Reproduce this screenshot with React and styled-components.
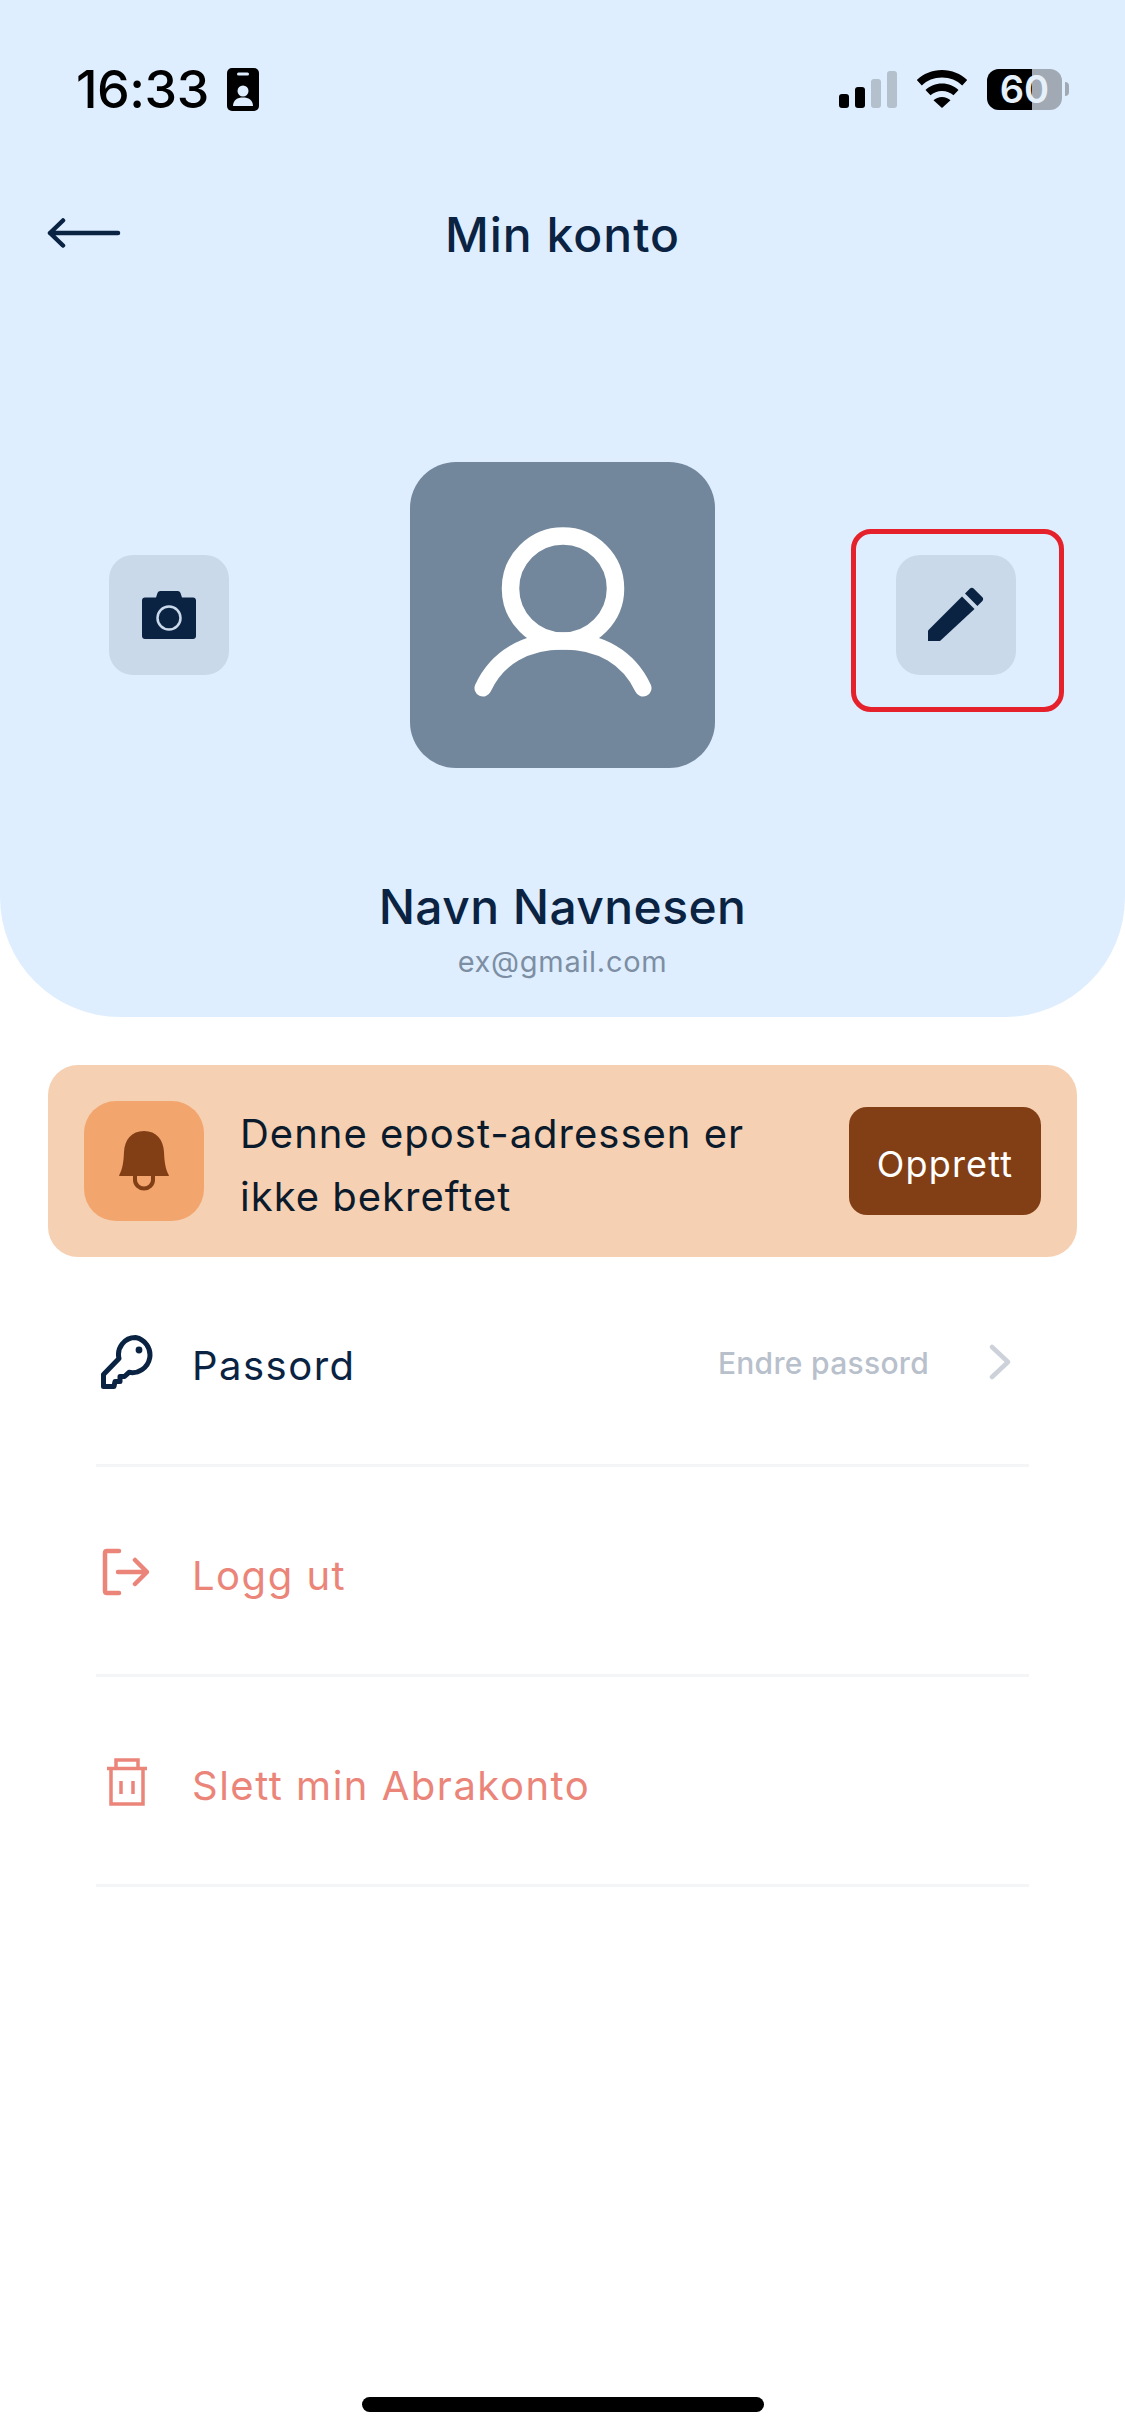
import styled, { createGlobalStyle } from 'styled-components';

const NAVY = '#0a2342';
const CORAL = '#eb8579';
const BROWN = '#823f16';

const GlobalStyle = createGlobalStyle`
  html, body {
    margin: 0;
    padding: 0;
    background: #ffffff;
  }
  * {
    box-sizing: border-box;
  }
  body {
    font-family: Inter, "Liberation Sans", sans-serif;
  }
`;

function App() {
  return (
    <Page>
      <GlobalStyle />
      <Header>
        <StatusBar>
          <StatusLeft>
            <Clock>16:33</Clock>
            <IdBadge />
          </StatusLeft>
          <StatusRight>
            <SignalBars>
              <Bar $height={14} $on />
              <Bar $height={21} $on />
              <Bar $height={29} />
              <Bar $height={37} />
            </SignalBars>
            <WifiIcon />
            <Battery>
              <BatteryFill />
              <BatteryText>60</BatteryText>
            </Battery>
            <BatteryNub />
          </StatusRight>
        </StatusBar>
        <NavBar>
          <BackArrow />
          <Title>Min konto</Title>
        </NavBar>
        <ProfileRow>
          <ActionButton $side='camera'>
            <CameraIcon />
          </ActionButton>
          <Avatar>
            <PersonIcon />
          </Avatar>
          <HighlightFrame>
            <ActionButton>
              <PencilIcon />
            </ActionButton>
          </HighlightFrame>
        </ProfileRow>
        <Name>Navn Navnesen</Name>
        <Email>ex@gmail.com</Email>
      </Header>

      <Banner>
        <BellBox>
          <BellIcon />
        </BellBox>
        <BannerText>
          Denne epost-adressen er
          <br />
          ikke bekreftet
        </BannerText>
        <BannerButton>Opprett</BannerButton>
      </Banner>

      <List>
        <Row>
          <RowIcon $inset={5}>
            <KeyIcon />
          </RowIcon>
          <RowLabel>Passord</RowLabel>
          <RowHint>Endre passord</RowHint>
          <Chevron />
        </Row>
        <Row>
          <RowIcon $inset={5}>
            <LogoutIcon />
          </RowIcon>
          <RowLabel $danger>Logg ut</RowLabel>
        </Row>
        <Row>
          <RowIcon $inset={11}>
            <TrashIcon />
          </RowIcon>
          <RowLabel $danger>Slett min Abrakonto</RowLabel>
        </Row>
      </List>

      <HomeIndicator />
    </Page>
  );
}

const IdBadge = () => (
  <svg width='32' height='43' viewBox='0 0 32 43'>
    <rect width='32' height='43' rx='5' fill='#000' />
    <rect x='10' y='4.500' width='12' height='3' rx='1.500' fill='#deeeff' />
    <circle cx='16' cy='23' r='5.500' fill='#deeeff' />
    <path d='M6 38c0-6 4.500-8.500 10-8.500S26 32 26 38z' fill='#deeeff' />
  </svg>
);

const WifiIcon = () => (
  <svg width='52' height='38' viewBox='0 0 52 38'>
    <path
      d='M26 0C16 0 7.500 3.800 .8 10l5 5.400C11 10.500 18 7.500 26 7.500s15 3 20.200 7.900l5-5.400C44.500 3.800 36 0 26 0z'
      fill='#000'
    />
    <path
      d='M26 13.500c-6.500 0-12.200 2.500-16.500 6.400l5 5.400c3-2.800 7-4.400 11.500-4.400s8.500 1.600 11.500 4.400l5-5.400c-4.300-3.900-10-6.400-16.500-6.400z'
      fill='#000'
    />
    <path d='M26 27c-3.400 0-6.400 1.300-8.500 3.200L26 38l8.500-7.800C32.400 28.300 29.400 27 26 27z' fill='#000' />
  </svg>
);

const BackArrow = () => (
  <ArrowSvg width='74' height='30' viewBox='0 0 74 30'>
    <path
      d='M16 2.500 3 15l13 12.500M3 15h68'
      fill='none'
      stroke={NAVY}
      strokeWidth='4.500'
      strokeLinecap='round'
      strokeLinejoin='round'
    />
  </ArrowSvg>
);

const CameraIcon = () => (
  <svg width='54' height='48' viewBox='0 0 54 48'>
    <path
      d='M3 6.500h11l1.500-4.500C16 .8 17 0 18.300 0h17.400C37 0 38 .8 38.500 2L40 6.500h11c1.700 0 3 1.300 3 3V45c0 1.700-1.300 3-3 3H3c-1.700 0-3-1.300-3-3V9.500c0-1.700 1.300-3 3-3z'
      fill={NAVY}
    />
    <circle cx='27' cy='27' r='11.500' fill='none' stroke='#c9d9ea' strokeWidth='2.500' />
  </svg>
);

const PencilIcon = () => (
  <svg width='56' height='56' viewBox='0 0 56 56'>
    <path d='M0 43.500 34 9.500l12.500 12.500L12 54H0z' fill={NAVY} />
    <path
      d='M37 6.500 42 1.500c1-1 2.600-1 3.600 0l8.800 8.800c1 1 1 2.600 0 3.600l-5 5z'
      fill={NAVY}
    />
  </svg>
);

const PersonIcon = () => (
  <svg width='178' height='170' viewBox='0 0 178 170'>
    <circle cx='89' cy='61.500' r='52.500' fill='none' stroke='#fff' strokeWidth='17.500' />
    <path
      d='M9 161c14-30 42-47 80-47s66 17 80 47'
      fill='none'
      stroke='#fff'
      strokeWidth='17'
      strokeLinecap='round'
    />
  </svg>
);

const BellIcon = () => (
  <svg width='50' height='60' viewBox='0 0 50 60'>
    <path
      d='M25 0C12.500 0 5.500 9 5 21c-.4 9.500-1.500 17-4.500 22.500C-.5 45.500.5 45 2.500 45h45c2 0 3 .5 2-1.500C46.500 38 45.400 30.500 45 21 44.500 9 37.500 0 25 0z'
      fill={BROWN}
    />
    <path d='M16 44v5a9 8.500 0 0 0 18 0v-5' fill='none' stroke={BROWN} strokeWidth='4' />
  </svg>
);

const KeyIcon = () => (
  <svg width='54' height='54' viewBox='0 0 54 54'>
    <path
      d='M34.500 2.500A17 17 0 0 0 18 23.500L2.500 39.500V51.500H13L14 46.500h5V41.500h4.500l4.500-4.200A17 17 0 1 0 34.500 2.500z'
      fill='none'
      stroke={NAVY}
      strokeWidth='5'
      strokeLinejoin='round'
    />
    <circle cx='38' cy='15' r='3.400' fill={NAVY} />
  </svg>
);

const LogoutIcon = () => (
  <svg width='48' height='48' viewBox='0 0 48 48'>
    <path
      d='M18 3H6Q4 3 4 5v38q0 2 2 2h12M17 24h28M34 12l12 12-12 12'
      fill='none'
      stroke={CORAL}
      strokeWidth='4.500'
      strokeLinecap='round'
      strokeLinejoin='round'
    />
  </svg>
);

const TrashIcon = () => (
  <svg width='40' height='48' viewBox='0 0 40 48'>
    <path
      d='M0 10.500h40M4 10.500V46h32V10.500M9 10.500V2h22v8.500M14 23v13M26 23v13'
      fill='none'
      stroke={CORAL}
      strokeWidth='3.500'
    />
  </svg>
);

const Chevron = () => (
  <ChevronSvg width='22' height='36' viewBox='0 0 22 36'>
    <path
      d='M3 3l16 15L3 33'
      fill='none'
      stroke='#cdd2da'
      strokeWidth='4.500'
      strokeLinecap='round'
      strokeLinejoin='round'
    />
  </ChevronSvg>
);

const Page = styled.div`
  width: 1125px;
  min-height: 2436px;
  display: flex;
  flex-direction: column;
  background: #ffffff;
  color: ${NAVY};
`;

const Header = styled.header`
  height: 1017px;
  display: flex;
  flex-direction: column;
  background: #deeeff;
  border-radius: 0 0 120px 120px;
`;

const StatusBar = styled.div`
  height: 68px;
  margin-top: 55px;
  padding: 0 56px 0 76px;
  display: flex;
  align-items: center;
  justify-content: space-between;
`;

const StatusLeft = styled.div`
  display: flex;
  align-items: center;
  gap: 18px;
`;

const Clock = styled.span`
  font-size: 52px;
  font-weight: 500;
  letter-spacing: -0.5px;
  color: #000000;
`;

const StatusRight = styled.div`
  display: flex;
  align-items: center;
`;

const SignalBars = styled.div`
  display: flex;
  align-items: flex-end;
  gap: 6px;
  height: 38px;
  margin-right: 19px;
`;

const Bar = styled.span`
  width: 10px;
  height: ${({ $height }) => $height}px;
  border-radius: 3px;
  background: ${({ $on }) => ($on ? '#000000' : '#b5c0cd')};
`;

const Battery = styled.div`
  position: relative;
  width: 75px;
  height: 41px;
  margin-left: 19px;
  border-radius: 12px;
  background: #a0a9b4;
  display: flex;
  align-items: center;
  justify-content: center;
`;

const BatteryFill = styled.span`
  position: absolute;
  left: 0;
  top: 0;
  bottom: 0;
  width: 45px;
  border-radius: 12px 0 0 12px;
  background: #000000;
`;

const BatteryText = styled.span`
  position: relative;
  font-size: 38px;
  font-weight: 600;
  line-height: 38px;
  color: #e6f0fb;
`;

const BatteryNub = styled.span`
  width: 4px;
  height: 14px;
  margin-left: 3px;
  border-radius: 0 4px 4px 0;
  background: #a0a9b4;
`;

const NavBar = styled.div`
  position: relative;
  height: 66px;
  margin-top: 78px;
  display: flex;
  align-items: center;
  justify-content: center;
`;

const ArrowSvg = styled.svg`
  position: absolute;
  left: 47px;
  top: 17px;
`;

const Title = styled.h1`
  margin: 0;
  font-size: 48px;
  font-weight: 500;
  letter-spacing: 1px;
  color: ${NAVY};
`;

const ProfileRow = styled.div`
  margin-top: 195px;
  display: grid;
  grid-template-columns: 410px 305px auto;
  align-items: start;
`;

const ActionButton = styled.div`
  width: 120px;
  height: 120px;
  display: flex;
  align-items: center;
  justify-content: center;
  border-radius: 24px;
  background: #c9d9ea;
  ${({ $side }) => $side === 'camera' && 'margin: 93px 0 0 109px;'}
`;

const Avatar = styled.div`
  width: 305px;
  height: 306px;
  padding-bottom: 6px;
  display: flex;
  align-items: center;
  justify-content: center;
  border-radius: 46px;
  background: #73879c;
`;

const HighlightFrame = styled.div`
  width: 213px;
  height: 183px;
  margin: 67px 0 0 136px;
  padding: 21px 3px 0 0;
  display: flex;
  justify-content: center;
  border: 5px solid #e5222c;
  border-radius: 20px;
`;

const Name = styled.div`
  margin-top: 111px;
  text-align: center;
  font-size: 48px;
  font-weight: 500;
  line-height: 56px;
  letter-spacing: 0.4px;
  color: ${NAVY};
`;

const Email = styled.div`
  margin-top: 9px;
  text-align: center;
  font-size: 29px;
  line-height: 36px;
  letter-spacing: 0.7px;
  color: #7d8ea3;
`;

const Banner = styled.section`
  height: 192px;
  margin: 48px 48px 0;
  padding: 0 36px;
  display: flex;
  align-items: center;
  background: #f6d0b3;
  border-radius: 30px;
`;

const BellBox = styled.div`
  width: 120px;
  height: 120px;
  flex: none;
  display: flex;
  align-items: center;
  justify-content: center;
  border-radius: 32px;
  background: #f2a66e;
`;

const BannerText = styled.p`
  flex: 1;
  margin: 0 0 0 36px;
  padding-top: 7px;
  font-size: 40px;
  line-height: 63px;
  letter-spacing: 1px;
  color: #0b1b2b;
`;

const BannerButton = styled.button`
  width: 192px;
  height: 108px;
  padding: 5px 0 0;
  border: none;
  border-radius: 18px;
  background: ${BROWN};
  color: #ffffff;
  font-family: inherit;
  font-size: 36px;
  font-weight: 400;
  letter-spacing: 1.2px;
`;

const List = styled.div`
  margin: 0 96px;
`;

const Row = styled.div`
  height: 210px;
  padding-top: 10px;
  display: flex;
  align-items: center;
  border-bottom: 3px solid #f4f5f7;
`;

const RowIcon = styled.div`
  width: 96px;
  flex: none;
  display: flex;
  margin-bottom: 8px;
  padding-left: ${({ $inset }) => $inset}px;
`;

const RowLabel = styled.span`
  flex: 1;
  font-size: 40px;
  letter-spacing: 1.5px;
  color: ${({ $danger }) => ($danger ? CORAL : NAVY)};
`;

const RowHint = styled.span`
  margin-bottom: 6px;
  font-size: 30px;
  font-weight: 500;
  letter-spacing: 0.3px;
  color: #b8c0cc;
`;

const ChevronSvg = styled.svg`
  margin: 0 18px 8px 60px;
`;

const HomeIndicator = styled.div`
  width: 402px;
  height: 15px;
  margin: auto auto 24px;
  border-radius: 8px;
  background: #000000;
`;

export default App;
